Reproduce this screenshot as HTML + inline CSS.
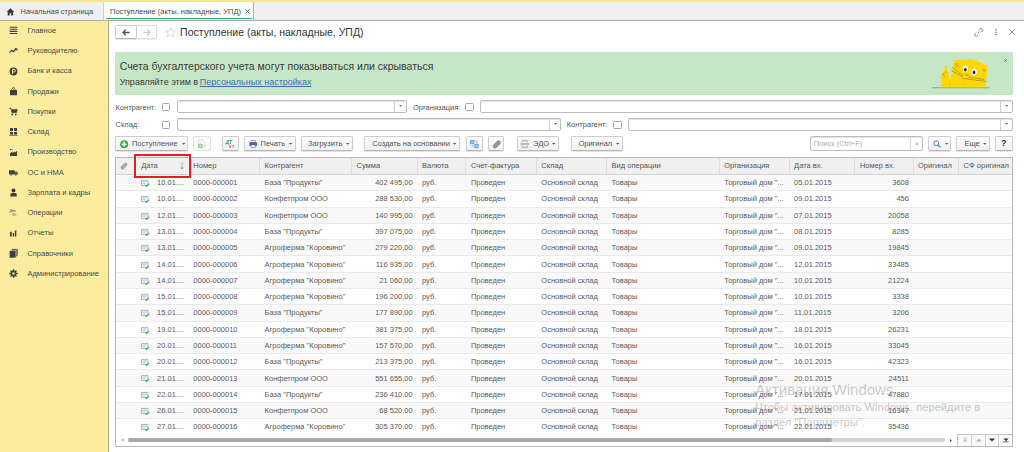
<!DOCTYPE html><html><head><meta charset="utf-8"><style>
*{margin:0;padding:0;box-sizing:border-box}
html,body{width:1024px;height:452px;overflow:hidden;background:#fff}
body{position:relative;font-family:"Liberation Sans",sans-serif;color:#595959}
.t{position:absolute;white-space:nowrap;line-height:1}
.b{position:absolute}
.btn{background:linear-gradient(#fefefe,#f1f1f1);border:1px solid #cdcdcd;border-bottom-color:#b5b5b5;border-radius:2px;box-shadow:0 1px 1px rgba(0,0,0,0.12)}
.inp{background:#fff;border:1px solid #bcbcbc;border-radius:2px;box-shadow:inset 0 1px 1px #e4e4e4}
.chk{background:#fff;border:1px solid #a9a9a9;border-radius:1.5px}
svg{position:absolute;overflow:visible}
</style></head><body>
<div class="b " style="left:0px;top:0px;width:1024px;height:2px;background:#f8e592"></div>
<div class="b " style="left:0px;top:2px;width:1024px;height:18px;background:#f0f0f0"></div>
<div class="b " style="left:0px;top:20px;width:1024px;height:1px;background:#acacac"></div>
<svg style="left:6px;top:7.6px" width="9" height="8" viewBox="0 0 9 8"><path d="M4.4 0.2 L8.2 3.9 L7.1 3.9 L7.1 7.4 L5.2 7.4 L5.2 5.3 L3.6 5.3 L3.6 7.4 L1.7 7.4 L1.7 3.9 L0.6 3.9 Z" fill="#3a3a3a"/></svg>
<div class="t" style="left:20.60px;top:7.85px;font-size:7.5px;color:#4a4a4a">Начальная страница</div>
<div class="b" style="left:103px;top:2px;width:1px;height:18px;background:#cfcfcf"></div>
<div class="b " style="left:104px;top:2px;width:149px;height:18px;background:#fff"></div>
<div class="b" style="left:253px;top:2px;width:1px;height:18px;background:#b0b0b0"></div>
<div class="b " style="left:106px;top:18px;width:146px;height:1px;background:#37b05a"></div>
<div class="t" style="left:110.00px;top:7.85px;font-size:7.5px;color:#4a4a4a">Поступление (акты, накладные, УПД)</div>
<svg style="left:245px;top:9px" width="5" height="5" viewBox="0 0 5 5"><path d="M0.3 0.3L4.7 4.7M4.7 0.3L0.3 4.7" stroke="#555" stroke-width="0.9"/></svg>
<div class="b " style="left:0px;top:21px;width:108px;height:431px;background:#fbec9e"></div>
<div class="b" style="left:108px;top:21px;width:1px;height:431px;background:#b3a97c"></div>
<div class="t" style="left:27.40px;top:26.95px;font-size:7.5px;color:#4a4a4a">Главное</div>
<div class="t" style="left:27.40px;top:47.20px;font-size:7.5px;color:#4a4a4a">Руководителю</div>
<div class="t" style="left:27.40px;top:67.45px;font-size:7.5px;color:#4a4a4a">Банк и касса</div>
<div class="t" style="left:27.40px;top:87.70px;font-size:7.5px;color:#4a4a4a">Продажи</div>
<div class="t" style="left:27.40px;top:107.95px;font-size:7.5px;color:#4a4a4a">Покупки</div>
<div class="t" style="left:27.40px;top:128.20px;font-size:7.5px;color:#4a4a4a">Склад</div>
<div class="t" style="left:27.40px;top:148.45px;font-size:7.5px;color:#4a4a4a">Производство</div>
<div class="t" style="left:27.40px;top:168.70px;font-size:7.5px;color:#4a4a4a">ОС и НМА</div>
<div class="t" style="left:27.40px;top:188.95px;font-size:7.5px;color:#4a4a4a">Зарплата и кадры</div>
<div class="t" style="left:27.40px;top:209.20px;font-size:7.5px;color:#4a4a4a">Операции</div>
<div class="t" style="left:27.40px;top:229.45px;font-size:7.5px;color:#4a4a4a">Отчеты</div>
<div class="t" style="left:27.40px;top:249.70px;font-size:7.5px;color:#4a4a4a">Справочники</div>
<div class="t" style="left:27.40px;top:269.95px;font-size:7.5px;color:#4a4a4a">Администрирование</div>
<svg style="left:9px;top:26.10px" width="9" height="9" viewBox="0 0 9 9"><path d="M0.7 1.2H8.3M0.7 3.3H8.3M0.7 5.4H8.3M0.7 7.5H8.3" stroke="#3f3f3f" stroke-width="1.1"/></svg>
<svg style="left:9px;top:46.35px" width="9" height="9" viewBox="0 0 9 9"><path d="M0.5 6.6L2.8 4.3L4.4 5.6L7.2 2.8" stroke="#3f3f3f" stroke-width="1.3" fill="none"/><path d="M5.4 2.2H8.3V5.1Z" fill="#3f3f3f"/></svg>
<svg style="left:9px;top:66.60px" width="9" height="9" viewBox="0 0 9 9"><circle cx="4.5" cy="4.5" r="3.9" fill="#3f3f3f"/><path d="M3.5 7V2.4H5.1A1.3 1.3 0 0 1 5.1 5H3.5" stroke="#fbec9e" stroke-width="1" fill="none"/></svg>
<svg style="left:9px;top:86.85px" width="9" height="9" viewBox="0 0 9 9"><path d="M1 3.2L2.6 2.2L3.6 3H5.4L6.4 2.2L8 3.2V8.2H1Z" fill="#3f3f3f"/><circle cx="4.5" cy="1.3" r="0.9" fill="none" stroke="#3f3f3f" stroke-width="0.8"/></svg>
<svg style="left:9px;top:107.10px" width="9" height="9" viewBox="0 0 9 9"><path d="M0.3 1.2H1.9L2.8 5.8H7.4L8.3 2.4H2.2" fill="#3f3f3f" stroke="#3f3f3f" stroke-width="0.6"/><circle cx="3.2" cy="7.6" r="0.9" fill="#3f3f3f"/><circle cx="6.8" cy="7.6" r="0.9" fill="#3f3f3f"/></svg>
<svg style="left:9px;top:127.35px" width="9" height="9" viewBox="0 0 9 9"><path d="M1 1H4V4H1ZM5 1H8V4H5ZM1 5H4V7.4H1ZM5 5H8V7.4H5Z" fill="#3f3f3f"/><path d="M0.5 8.3H8.5" stroke="#3f3f3f" stroke-width="0.8"/></svg>
<svg style="left:9px;top:147.60px" width="9" height="9" viewBox="0 0 9 9"><path d="M1 8.1V5.3L3.5 3.5V4.9L5.6 3.5V4.5L8.1 3.1V8.1Z" fill="#3f3f3f"/><path d="M1 0.7H2.2V1.9H1ZM2.6 1.2H3.4V2H2.6Z" fill="#3f3f3f"/></svg>
<svg style="left:9px;top:167.85px" width="9" height="9" viewBox="0 0 9 9"><path d="M0 2.2H5.6V6.4H0ZM5.6 3.2H7.6L8.8 4.6V6.4H5.6Z" fill="#3f3f3f"/><path d="M6.2 3.7H7.3L8 4.5H6.2Z" fill="#fbec9e"/><circle cx="2.1" cy="6.7" r="0.95" fill="#3f3f3f" stroke="#fbec9e" stroke-width="0.3"/><circle cx="6.8" cy="6.7" r="0.95" fill="#3f3f3f" stroke="#fbec9e" stroke-width="0.3"/></svg>
<svg style="left:9px;top:188.10px" width="9" height="9" viewBox="0 0 9 9"><circle cx="4.5" cy="2.6" r="2" fill="#3f3f3f"/><path d="M1.2 8.4V6.9Q1.2 5.3 3 5.1H6Q7.8 5.3 7.8 6.9V8.4Z" fill="#3f3f3f"/></svg>
<svg style="left:9px;top:208.35px" width="9" height="9" viewBox="0 0 9 9"><text x="0.4" y="4.2" font-size="4.2" font-style="italic" fill="#3f3f3f" font-family="Liberation Sans">Дт</text><text x="3.6" y="8.3" font-size="3.8" fill="#3f3f3f" font-family="Liberation Sans">Кт</text></svg>
<svg style="left:9px;top:228.60px" width="9" height="9" viewBox="0 0 9 9"><path d="M1 2.7H2.7V7.6H1ZM3.7 3.9H5V7.6H3.7ZM5.8 1.4H7.3V7.6H5.8Z" fill="#3f3f3f"/></svg>
<svg style="left:9px;top:248.85px" width="9" height="9" viewBox="0 0 9 9"><path d="M2.9 0.4H8.3V6.6" stroke="#3f3f3f" stroke-width="0.8" fill="none"/><path d="M1.7 1.2H7.4V7.5" stroke="#3f3f3f" stroke-width="0.6" fill="none"/><path d="M0.6 2H6.6V8.7H0.6Z" fill="#3f3f3f"/></svg>
<svg style="left:9px;top:269.10px" width="9" height="9" viewBox="0 0 9 9"><path d="M4.5 0.3V8.7M0.3 4.5H8.7M1.5 1.5L7.5 7.5M7.5 1.5L1.5 7.5" stroke="#3f3f3f" stroke-width="1.4"/><circle cx="4.5" cy="4.5" r="2.9" fill="#3f3f3f"/><circle cx="4.5" cy="4.5" r="1.3" fill="#fbec9e"/></svg>
<div class="b btn" style="left:115px;top:25px;width:22px;height:14px;border-radius:2px 0 0 2px;background:#fff"></div>
<div class="b btn" style="left:137px;top:25px;width:20px;height:14px;border-color:#dedede;border-left:none;background:#fff;box-shadow:0 1px 0 #eee;border-radius:0 2px 2px 0"></div>
<svg style="left:122px;top:28.5px" width="8" height="7" viewBox="0 0 8 7"><path d="M7.6 3.5H1.5M3.8 0.8L1 3.5L3.8 6.2" stroke="#555" stroke-width="1.4" fill="none"/></svg>
<svg style="left:143px;top:28.5px" width="8" height="7" viewBox="0 0 8 7"><path d="M0.4 3.5H6.5M4.2 0.8L7 3.5L4.2 6.2" stroke="#c9c9c9" stroke-width="1.2" fill="none"/></svg>
<svg style="left:164.5px;top:27px" width="11" height="11" viewBox="0 0 11 11"><path d="M5.5 0.6L6.9 4H10.4L7.6 6.2L8.6 9.9L5.5 7.7L2.4 9.9L3.4 6.2L0.6 4H4.1Z" fill="none" stroke="#cfcfcf" stroke-width="0.8"/></svg>
<div class="t" style="left:180.10px;top:27.01px;font-size:10.5px;color:#333">Поступление (акты, накладные, УПД)</div>
<svg style="left:974px;top:28px" width="9" height="9" viewBox="0 0 9 9"><path d="M3.6 5.4L5.4 3.6M4.6 2.2L5.8 1A1.5 1.5 0 0 1 8 3.2L6.8 4.4M4.4 6.8L3.2 8A1.5 1.5 0 0 1 1 5.8L2.2 4.6" stroke="#8a8a8a" stroke-width="0.95" fill="none"/></svg>
<svg style="left:993.5px;top:28px" width="4" height="8" viewBox="0 0 4 8"><circle cx="2" cy="1.8" r="0.75" fill="#666"/><circle cx="2" cy="4.2" r="0.75" fill="#666"/><circle cx="2" cy="6.6" r="0.75" fill="#666"/></svg>
<svg style="left:1009px;top:29px" width="6" height="6" viewBox="0 0 6 6"><path d="M0.3 0.3L5.7 5.7M5.7 0.3L0.3 5.7" stroke="#777" stroke-width="0.8"/></svg>
<div class="b " style="left:115px;top:52px;width:898px;height:43px;background:#c6e7c6"></div>
<div class="t" style="left:119.70px;top:61.11px;font-size:10.5px;color:#3a3a3a">Счета бухгалтерского учета могут показываться или скрываться</div>
<div class="t" style="left:119.70px;top:78.18px;font-size:9px;color:#3a3a3a">Управляйте этим в </div>
<div class="t" style="left:199.80px;top:78.18px;font-size:9px;color:#3a6fb0;text-decoration:underline;text-decoration-skip-ink:none">Персональных настройках</div>
<svg style="left:1003.5px;top:58.5px" width="3" height="3" viewBox="0 0 3 3"><path d="M0.2 0.2L2.8 2.8M2.8 0.2L0.2 2.8" stroke="#666" stroke-width="0.7"/></svg>
<svg style="left:935px;top:55px" width="60" height="37" viewBox="0 0 60 37">
<path d="M-2.5 32.8H54.5" stroke="#8f9f86" stroke-width="1.1"/>
<path d="M6.5 32.3 L6 25 Q5.6 19 8 16.5 Q9.5 15.5 9.8 14.8 L9.7 11.5 Q10.6 9.8 11.8 11 L12 15 Q13.8 17 13.5 21 L14.6 24.5 L14.6 32.3Z" fill="#fdd800"/>
<path d="M14.6 32.3 L14.8 25 Q16.5 20 17.5 14 Q18 8 19.6 4.8 L28 5.2 L30 4.2 L32 5 L34 3.8 L36.5 4.8 L39 4.5 Q46 7.5 52.5 11 L51.8 20 Q50.5 26 50.2 32.3Z" fill="#fdd800"/>
<circle cx="8.4" cy="19.5" r="1.2" fill="#f7a21e"/><circle cx="10.6" cy="17.4" r="1" fill="#f7a21e"/><circle cx="9.8" cy="21.5" r="0.8" fill="#f7a21e"/>
<path d="M14.7 25.5V32" stroke="#f2a52a" stroke-width="0.6"/>
<ellipse cx="21.8" cy="10" rx="1.6" ry="2" fill="#f7a21e"/>
<ellipse cx="49.2" cy="15.2" rx="1.7" ry="1.8" fill="#f7a21e"/>
<ellipse cx="30.3" cy="14" rx="2.6" ry="3.4" fill="#fff"/><ellipse cx="30.3" cy="14.7" rx="1.4" ry="1.7" fill="#2a2a2a"/>
<ellipse cx="39.1" cy="16.8" rx="2.8" ry="3.4" fill="#fff"/><ellipse cx="39" cy="17.4" rx="1.4" ry="1.8" fill="#2a2a2a"/>
<path d="M29.5 18.6L34.5 19.6L31.8 21.5Z" fill="#f7931e"/>
<path d="M17.2 12.3L28.6 20.9M16.4 15.5L27.8 21.7M27 23.3L52.4 26.6M33.6 22.1L49.1 24.5" stroke="#7d7238" stroke-width="0.55" fill="none"/>
<path d="M28.8 26.5Q29 28.3 30.6 28.8" stroke="#f2a52a" stroke-width="0.6" fill="none"/>
</svg>
<div class="t" style="left:115.50px;top:103.55px;font-size:7.5px;color:#555">Контрагент:</div>
<div class="b chk" style="left:162px;top:103px;width:8px;height:8px;"></div>
<div class="b inp" style="left:177px;top:100px;width:230px;height:13px;"></div>
<div class="b" style="left:394px;top:101px;width:1px;height:11px;background:#cfcfcf"></div>
<svg style="left:398.9px;top:104.8px" width="4" height="3" viewBox="0 0 4 3"><path d="M0 0H3.2L1.6 2Z" fill="#777"/></svg>
<div class="t" style="left:413.00px;top:103.55px;font-size:7.5px;color:#555">Организация:</div>
<div class="b chk" style="left:465px;top:103px;width:9px;height:8px;"></div>
<div class="b inp" style="left:480px;top:100px;width:533px;height:13px;"></div>
<div class="b" style="left:1000px;top:101px;width:1px;height:11px;background:#cfcfcf"></div>
<svg style="left:1005.4px;top:104.8px" width="4" height="3" viewBox="0 0 4 3"><path d="M0 0H3.2L1.6 2Z" fill="#777"/></svg>
<div class="t" style="left:115.50px;top:121.45px;font-size:7.5px;color:#555">Склад:</div>
<div class="b chk" style="left:162px;top:121px;width:8px;height:8px;"></div>
<div class="b inp" style="left:177px;top:118px;width:384px;height:13px;"></div>
<div class="b" style="left:549px;top:119px;width:1px;height:11px;background:#cfcfcf"></div>
<svg style="left:553.9px;top:122.8px" width="4" height="3" viewBox="0 0 4 3"><path d="M0 0H3.2L1.6 2Z" fill="#777"/></svg>
<div class="t" style="left:566.70px;top:121.45px;font-size:7.5px;color:#555">Контрагент:</div>
<div class="b chk" style="left:613px;top:121px;width:9px;height:8px;"></div>
<div class="b inp" style="left:628px;top:118px;width:385px;height:13px;"></div>
<div class="b" style="left:1000px;top:119px;width:1px;height:11px;background:#cfcfcf"></div>
<svg style="left:1005.4px;top:122.8px" width="4" height="3" viewBox="0 0 4 3"><path d="M0 0H3.2L1.6 2Z" fill="#777"/></svg>
<div class="b btn" style="left:115px;top:136px;width:73px;height:15px;"></div>
<svg style="left:119.7px;top:140.4px" width="8.4" height="8.4" viewBox="0 0 9 9"><circle cx="4.5" cy="4.5" r="4.3" fill="#3aaa4a"/><path d="M4.5 2V7M2 4.5H7" stroke="#fff" stroke-width="1.6"/></svg>
<div class="t" style="left:131.90px;top:139.85px;font-size:7.5px;color:#505050">Поступление</div>
<svg style="left:181.50px;top:143.1px" width="4" height="3" viewBox="0 0 4 3"><path d="M0 0H3.4L1.7 1.7Z" fill="#555"/></svg>
<div class="b btn" style="left:193px;top:136px;width:18px;height:15px;background:#fafafa;border-color:#e0e0e0;box-shadow:none"></div>
<svg style="left:197px;top:139px" width="9" height="10" viewBox="0 0 9 10"><path d="M1.3 1H5.6L7.6 3V8.6H1.3Z" fill="#f7f7f7" stroke="#d2d2d2" stroke-width="0.6"/><circle cx="3.4" cy="6.8" r="2.4" fill="#86c894"/><path d="M3.4 5.6V8M2.2 6.8H4.6" stroke="#e8f5ea" stroke-width="0.8"/></svg>
<div class="b btn" style="left:222px;top:136px;width:17px;height:15px;"></div>
<svg style="left:224.5px;top:139px" width="11" height="10" viewBox="0 0 11 10"><text x="0.6" y="4.8" font-size="4.8" font-weight="bold" font-style="italic" fill="#2f9e44" font-family="Liberation Sans">ДТ</text><text x="4" y="8.6" font-size="4.2" font-weight="bold" fill="#e5533f" font-family="Liberation Sans">КТ</text></svg>
<div class="b btn" style="left:244px;top:136px;width:52px;height:15px;"></div>
<svg style="left:248.5px;top:139.5px" width="8.5" height="8" viewBox="0 0 9 8"><path d="M2.3 0.3H6.7V2.4H2.3Z" fill="#fff" stroke="#4a6a9a" stroke-width="0.6"/><path d="M0.4 2.6Q0.4 2.2 1 2.2H8Q8.6 2.2 8.6 2.6V6H0.4Z" fill="#4a6a9a"/><path d="M2.2 5H6.8V7.7H2.2Z" fill="#fff" stroke="#4a6a9a" stroke-width="0.6"/></svg>
<div class="t" style="left:260.50px;top:139.85px;font-size:7.5px;color:#505050">Печать</div>
<svg style="left:288.50px;top:143.1px" width="4" height="3" viewBox="0 0 4 3"><path d="M0 0H3.4L1.7 1.7Z" fill="#555"/></svg>
<div class="b btn" style="left:301px;top:136px;width:52px;height:15px;"></div>
<div class="t" style="left:308.10px;top:139.85px;font-size:7.5px;color:#505050">Загрузить</div>
<svg style="left:346.00px;top:143.1px" width="4" height="3" viewBox="0 0 4 3"><path d="M0 0H3.4L1.7 1.7Z" fill="#555"/></svg>
<div class="b btn" style="left:364px;top:136px;width:96px;height:15px;"></div>
<div class="t" style="left:372.20px;top:139.85px;font-size:7.5px;color:#505050">Создать на основании</div>
<svg style="left:453.00px;top:143.1px" width="4" height="3" viewBox="0 0 4 3"><path d="M0 0H3.4L1.7 1.7Z" fill="#555"/></svg>
<div class="b btn" style="left:466px;top:136px;width:17px;height:15px;"></div>
<svg style="left:470px;top:139.8px" width="8.6" height="8.3" viewBox="0 0 8.6 8.3"><path d="M0 0H8.6V8.3H0Z" fill="#e3edf8"/><path d="M0 0H4.3V4.1H0ZM4.3 4.1H8.6V8.3H4.3Z" fill="#7aa6d8"/><path d="M1 1H3.3V3.1H1ZM5.3 5.1H7.6V7.3H5.3Z" fill="#9dc0e6"/><path d="M0.6 5H2.6V7.6M6 0.7V3.2H8" stroke="#8fb4e0" stroke-width="0.6" fill="none"/></svg>
<div class="b btn" style="left:488px;top:136px;width:16px;height:15px;"></div>
<svg style="left:491.5px;top:139.8px" width="9" height="8.5" viewBox="0 0 9 8.5"><path d="M3 6.2L6.6 2.6" stroke="#909090" stroke-width="4.4" stroke-linecap="round"/><path d="M3.2 5.4L5.9 2.7" stroke="#b0b0b0" stroke-width="0.6"/></svg>
<div class="b btn" style="left:517px;top:136px;width:42px;height:15px;"></div>
<svg style="left:519.8px;top:139.8px" width="9.4" height="8" viewBox="0 0 9.4 8"><path d="M2 0.4H7.4V2.6M2 2.6V0.4M2 5.4V7.6H7.4V5.4" stroke="#9c9c9c" stroke-width="0.7" fill="none"/><path d="M0.3 4L1.6 2.8V5.2ZM9.1 4L7.8 2.8V5.2Z" fill="#8a8a8a"/><path d="M1.4 3.1H8V4.9H1.4Z" fill="#b5b5b5"/><path d="M2.8 1.4H6.6M2.8 6.5H6.6" stroke="#b8b8b8" stroke-width="0.6"/></svg>
<div class="t" style="left:533.10px;top:139.85px;font-size:7.5px;color:#505050">ЭДО</div>
<svg style="left:552.00px;top:143.1px" width="4" height="3" viewBox="0 0 4 3"><path d="M0 0H3.4L1.7 1.7Z" fill="#555"/></svg>
<div class="b btn" style="left:571px;top:136px;width:52px;height:15px;"></div>
<div class="t" style="left:578.40px;top:139.85px;font-size:7.5px;color:#505050">Оригинал</div>
<svg style="left:616.00px;top:143.1px" width="4" height="3" viewBox="0 0 4 3"><path d="M0 0H3.4L1.7 1.7Z" fill="#555"/></svg>
<div class="b inp" style="left:810px;top:136px;width:113px;height:15px;"></div>
<div class="b" style="left:910px;top:137px;width:1px;height:13px;background:#d6d6d6"></div>
<div class="t" style="left:813.80px;top:140.05px;font-size:7.5px;color:#adadad">Поиск (Ctrl+F)</div>
<svg style="left:914.8px;top:142.2px" width="3.6" height="3.6" viewBox="0 0 4 4"><path d="M0.3 0.3L3.7 3.7M3.7 0.3L0.3 3.7" stroke="#888" stroke-width="0.7"/></svg>
<div class="b btn" style="left:928px;top:136px;width:23px;height:15px;"></div>
<svg style="left:932.5px;top:139.6px" width="8" height="8" viewBox="0 0 8 8"><circle cx="3.2" cy="3.2" r="2.4" fill="none" stroke="#4a7fc0" stroke-width="1"/><path d="M4.9 4.9L7.3 7.3" stroke="#4a7fc0" stroke-width="1.4"/></svg>
<svg style="left:944.50px;top:143.1px" width="4" height="3" viewBox="0 0 4 3"><path d="M0 0H3.4L1.7 1.7Z" fill="#555"/></svg>
<div class="b btn" style="left:956px;top:136px;width:34px;height:15px;"></div>
<div class="t" style="left:964.50px;top:139.85px;font-size:7.5px;color:#505050">Еще</div>
<svg style="left:983.30px;top:143.1px" width="4" height="3" viewBox="0 0 4 3"><path d="M0 0H3.4L1.7 1.7Z" fill="#555"/></svg>
<div class="b btn" style="left:995px;top:136px;width:18px;height:15px;"></div>
<div class="t" style="left:1001.00px;top:138.98px;font-size:9px;color:#333;font-weight:bold">?</div>
<div class="b " style="left:115px;top:157px;width:898px;height:290px;border:1px solid #b9b9b9;background:#fff"></div>
<div class="b " style="left:116px;top:158px;width:896px;height:17px;background:#f0f0f0;border-bottom:1px solid #d4d4d4"></div>
<div class="b" style="left:135px;top:158px;width:1px;height:16px;background:#dedede"></div>
<div class="b" style="left:191px;top:158px;width:1px;height:16px;background:#dedede"></div>
<div class="b" style="left:259px;top:158px;width:1px;height:16px;background:#dedede"></div>
<div class="b" style="left:351px;top:158px;width:1px;height:16px;background:#dedede"></div>
<div class="b" style="left:417px;top:158px;width:1px;height:16px;background:#dedede"></div>
<div class="b" style="left:465px;top:158px;width:1px;height:16px;background:#dedede"></div>
<div class="b" style="left:536px;top:158px;width:1px;height:16px;background:#dedede"></div>
<div class="b" style="left:606px;top:158px;width:1px;height:16px;background:#dedede"></div>
<div class="b" style="left:719px;top:158px;width:1px;height:16px;background:#dedede"></div>
<div class="b" style="left:789px;top:158px;width:1px;height:16px;background:#dedede"></div>
<div class="b" style="left:854px;top:158px;width:1px;height:16px;background:#dedede"></div>
<div class="b" style="left:913px;top:158px;width:1px;height:16px;background:#dedede"></div>
<div class="b" style="left:958px;top:158px;width:1px;height:16px;background:#dedede"></div>
<div class="t" style="left:141.20px;top:161.85px;font-size:7.5px;color:#555">Дата</div>
<div class="t" style="left:193.30px;top:161.85px;font-size:7.5px;color:#555">Номер</div>
<div class="t" style="left:264.60px;top:161.85px;font-size:7.5px;color:#555">Контрагент</div>
<div class="t" style="left:356.50px;top:161.85px;font-size:7.5px;color:#555">Сумма</div>
<div class="t" style="left:422.00px;top:161.85px;font-size:7.5px;color:#555">Валюта</div>
<div class="t" style="left:470.90px;top:161.85px;font-size:7.5px;color:#555">Счет-фактура</div>
<div class="t" style="left:541.30px;top:161.85px;font-size:7.5px;color:#555">Склад</div>
<div class="t" style="left:611.60px;top:161.85px;font-size:7.5px;color:#555">Вид операции</div>
<div class="t" style="left:724.20px;top:161.85px;font-size:7.5px;color:#555">Организация</div>
<div class="t" style="left:794.10px;top:161.85px;font-size:7.5px;color:#555">Дата вх.</div>
<div class="t" style="left:859.90px;top:161.85px;font-size:7.5px;color:#555">Номер вх.</div>
<div class="t" style="left:918.00px;top:161.85px;font-size:7.5px;color:#555">Оригинал</div>
<div class="t" style="left:963.60px;top:161.85px;font-size:7.5px;color:#555">СФ оригинал</div>
<svg style="left:119.5px;top:161.5px" width="8" height="8" viewBox="0 0 8 8"><path d="M2.4 5.7L5.6 2.5" stroke="#a6a6a6" stroke-width="3.8" stroke-linecap="round"/><path d="M2.6 5L5 2.6" stroke="#c4c4c4" stroke-width="0.5"/></svg>
<svg style="left:180px;top:161.6px" width="4" height="8" viewBox="0 0 4 8"><path d="M2 0.4V6.6" stroke="#7a8aa0" stroke-width="0.65"/><path d="M1 5.3L2 7L3 5.3" stroke="#555" stroke-width="0.6" fill="none"/></svg>
<div class="b " style="left:116px;top:175px;width:896px;height:16px;background:#f9f9f9;border-bottom:1px solid #eaeaea"></div>
<svg style="left:141px;top:180.10px" width="9" height="8" viewBox="0 0 9 8"><path d="M0.4 0.4H7V5.6H0.4Z" fill="#f4f6fa" stroke="#8e9cb6" stroke-width="0.7"/><path d="M1.6 2H5.6M1.6 3.4H4" stroke="#8e9cb6" stroke-width="0.6"/><path d="M4.5 5.2L5.6 6.4L7.9 3.9" stroke="#35b046" stroke-width="1.2" fill="none"/></svg>
<div class="t" style="left:157.10px;top:179.15px;font-size:7.5px">10.01....</div>
<div class="t" style="left:193.30px;top:179.15px;font-size:7.5px">0000-000001</div>
<div class="t" style="left:264.60px;top:179.15px;font-size:7.5px">База "Продукты"</div>
<div class="t" style="right:611.30px;top:179.15px;font-size:7.5px">402 495,00</div>
<div class="t" style="left:422.00px;top:179.15px;font-size:7.5px">руб.</div>
<div class="t" style="left:470.90px;top:179.15px;font-size:7.5px">Проведен</div>
<div class="t" style="left:541.30px;top:179.15px;font-size:7.5px">Основной склад</div>
<div class="t" style="left:611.60px;top:179.15px;font-size:7.5px">Товары</div>
<div class="t" style="left:724.20px;top:179.15px;font-size:7.5px">Торговый дом "...</div>
<div class="t" style="left:794.10px;top:179.15px;font-size:7.5px">05.01.2015</div>
<div class="t" style="right:115.10px;top:179.15px;font-size:7.5px">3608</div>
<div class="b " style="left:116px;top:191px;width:896px;height:17px;background:#fff;border-bottom:1px solid #eaeaea"></div>
<svg style="left:141px;top:196.38px" width="9" height="8" viewBox="0 0 9 8"><path d="M0.4 0.4H7V5.6H0.4Z" fill="#f4f6fa" stroke="#8e9cb6" stroke-width="0.7"/><path d="M1.6 2H5.6M1.6 3.4H4" stroke="#8e9cb6" stroke-width="0.6"/><path d="M4.5 5.2L5.6 6.4L7.9 3.9" stroke="#35b046" stroke-width="1.2" fill="none"/></svg>
<div class="t" style="left:157.10px;top:195.43px;font-size:7.5px">10.01....</div>
<div class="t" style="left:193.30px;top:195.43px;font-size:7.5px">0000-000002</div>
<div class="t" style="left:264.60px;top:195.43px;font-size:7.5px">Конфетпром ООО</div>
<div class="t" style="right:611.30px;top:195.43px;font-size:7.5px">288 530,00</div>
<div class="t" style="left:422.00px;top:195.43px;font-size:7.5px">руб.</div>
<div class="t" style="left:470.90px;top:195.43px;font-size:7.5px">Проведен</div>
<div class="t" style="left:541.30px;top:195.43px;font-size:7.5px">Основной склад</div>
<div class="t" style="left:611.60px;top:195.43px;font-size:7.5px">Товары</div>
<div class="t" style="left:724.20px;top:195.43px;font-size:7.5px">Торговый дом "...</div>
<div class="t" style="left:794.10px;top:195.43px;font-size:7.5px">09.01.2015</div>
<div class="t" style="right:115.10px;top:195.43px;font-size:7.5px">456</div>
<div class="b " style="left:116px;top:208px;width:896px;height:16px;background:#f9f9f9;border-bottom:1px solid #eaeaea"></div>
<svg style="left:141px;top:212.66px" width="9" height="8" viewBox="0 0 9 8"><path d="M0.4 0.4H7V5.6H0.4Z" fill="#f4f6fa" stroke="#8e9cb6" stroke-width="0.7"/><path d="M1.6 2H5.6M1.6 3.4H4" stroke="#8e9cb6" stroke-width="0.6"/><path d="M4.5 5.2L5.6 6.4L7.9 3.9" stroke="#35b046" stroke-width="1.2" fill="none"/></svg>
<div class="t" style="left:157.10px;top:211.71px;font-size:7.5px">12.01....</div>
<div class="t" style="left:193.30px;top:211.71px;font-size:7.5px">0000-000003</div>
<div class="t" style="left:264.60px;top:211.71px;font-size:7.5px">Конфетпром ООО</div>
<div class="t" style="right:611.30px;top:211.71px;font-size:7.5px">140 995,00</div>
<div class="t" style="left:422.00px;top:211.71px;font-size:7.5px">руб.</div>
<div class="t" style="left:470.90px;top:211.71px;font-size:7.5px">Проведен</div>
<div class="t" style="left:541.30px;top:211.71px;font-size:7.5px">Основной склад</div>
<div class="t" style="left:611.60px;top:211.71px;font-size:7.5px">Товары</div>
<div class="t" style="left:724.20px;top:211.71px;font-size:7.5px">Торговый дом "...</div>
<div class="t" style="left:794.10px;top:211.71px;font-size:7.5px">07.01.2015</div>
<div class="t" style="right:115.10px;top:211.71px;font-size:7.5px">20058</div>
<div class="b " style="left:116px;top:224px;width:896px;height:16px;background:#fff;border-bottom:1px solid #eaeaea"></div>
<svg style="left:141px;top:228.94px" width="9" height="8" viewBox="0 0 9 8"><path d="M0.4 0.4H7V5.6H0.4Z" fill="#f4f6fa" stroke="#8e9cb6" stroke-width="0.7"/><path d="M1.6 2H5.6M1.6 3.4H4" stroke="#8e9cb6" stroke-width="0.6"/><path d="M4.5 5.2L5.6 6.4L7.9 3.9" stroke="#35b046" stroke-width="1.2" fill="none"/></svg>
<div class="t" style="left:157.10px;top:227.99px;font-size:7.5px">13.01....</div>
<div class="t" style="left:193.30px;top:227.99px;font-size:7.5px">0000-000004</div>
<div class="t" style="left:264.60px;top:227.99px;font-size:7.5px">База "Продукты"</div>
<div class="t" style="right:611.30px;top:227.99px;font-size:7.5px">397 075,00</div>
<div class="t" style="left:422.00px;top:227.99px;font-size:7.5px">руб.</div>
<div class="t" style="left:470.90px;top:227.99px;font-size:7.5px">Проведен</div>
<div class="t" style="left:541.30px;top:227.99px;font-size:7.5px">Основной склад</div>
<div class="t" style="left:611.60px;top:227.99px;font-size:7.5px">Товары</div>
<div class="t" style="left:724.20px;top:227.99px;font-size:7.5px">Торговый дом "...</div>
<div class="t" style="left:794.10px;top:227.99px;font-size:7.5px">08.01.2015</div>
<div class="t" style="right:115.10px;top:227.99px;font-size:7.5px">8285</div>
<div class="b " style="left:116px;top:240px;width:896px;height:16px;background:#f9f9f9;border-bottom:1px solid #eaeaea"></div>
<svg style="left:141px;top:245.22px" width="9" height="8" viewBox="0 0 9 8"><path d="M0.4 0.4H7V5.6H0.4Z" fill="#f4f6fa" stroke="#8e9cb6" stroke-width="0.7"/><path d="M1.6 2H5.6M1.6 3.4H4" stroke="#8e9cb6" stroke-width="0.6"/><path d="M4.5 5.2L5.6 6.4L7.9 3.9" stroke="#35b046" stroke-width="1.2" fill="none"/></svg>
<div class="t" style="left:157.10px;top:244.27px;font-size:7.5px">13.01....</div>
<div class="t" style="left:193.30px;top:244.27px;font-size:7.5px">0000-000005</div>
<div class="t" style="left:264.60px;top:244.27px;font-size:7.5px">Агроферма "Коровино"</div>
<div class="t" style="right:611.30px;top:244.27px;font-size:7.5px">279 220,00</div>
<div class="t" style="left:422.00px;top:244.27px;font-size:7.5px">руб.</div>
<div class="t" style="left:470.90px;top:244.27px;font-size:7.5px">Проведен</div>
<div class="t" style="left:541.30px;top:244.27px;font-size:7.5px">Основной склад</div>
<div class="t" style="left:611.60px;top:244.27px;font-size:7.5px">Товары</div>
<div class="t" style="left:724.20px;top:244.27px;font-size:7.5px">Торговый дом "...</div>
<div class="t" style="left:794.10px;top:244.27px;font-size:7.5px">09.01.2015</div>
<div class="t" style="right:115.10px;top:244.27px;font-size:7.5px">19845</div>
<div class="b " style="left:116px;top:256px;width:896px;height:17px;background:#fff;border-bottom:1px solid #eaeaea"></div>
<svg style="left:141px;top:261.50px" width="9" height="8" viewBox="0 0 9 8"><path d="M0.4 0.4H7V5.6H0.4Z" fill="#f4f6fa" stroke="#8e9cb6" stroke-width="0.7"/><path d="M1.6 2H5.6M1.6 3.4H4" stroke="#8e9cb6" stroke-width="0.6"/><path d="M4.5 5.2L5.6 6.4L7.9 3.9" stroke="#35b046" stroke-width="1.2" fill="none"/></svg>
<div class="t" style="left:157.10px;top:260.55px;font-size:7.5px">14.01....</div>
<div class="t" style="left:193.30px;top:260.55px;font-size:7.5px">0000-000006</div>
<div class="t" style="left:264.60px;top:260.55px;font-size:7.5px">Агроферма "Коровино"</div>
<div class="t" style="right:611.30px;top:260.55px;font-size:7.5px">116 935,00</div>
<div class="t" style="left:422.00px;top:260.55px;font-size:7.5px">руб.</div>
<div class="t" style="left:470.90px;top:260.55px;font-size:7.5px">Проведен</div>
<div class="t" style="left:541.30px;top:260.55px;font-size:7.5px">Основной склад</div>
<div class="t" style="left:611.60px;top:260.55px;font-size:7.5px">Товары</div>
<div class="t" style="left:724.20px;top:260.55px;font-size:7.5px">Торговый дом "...</div>
<div class="t" style="left:794.10px;top:260.55px;font-size:7.5px">12.01.2015</div>
<div class="t" style="right:115.10px;top:260.55px;font-size:7.5px">33485</div>
<div class="b " style="left:116px;top:273px;width:896px;height:16px;background:#f9f9f9;border-bottom:1px solid #eaeaea"></div>
<svg style="left:141px;top:277.78px" width="9" height="8" viewBox="0 0 9 8"><path d="M0.4 0.4H7V5.6H0.4Z" fill="#f4f6fa" stroke="#8e9cb6" stroke-width="0.7"/><path d="M1.6 2H5.6M1.6 3.4H4" stroke="#8e9cb6" stroke-width="0.6"/><path d="M4.5 5.2L5.6 6.4L7.9 3.9" stroke="#35b046" stroke-width="1.2" fill="none"/></svg>
<div class="t" style="left:157.10px;top:276.83px;font-size:7.5px">14.01....</div>
<div class="t" style="left:193.30px;top:276.83px;font-size:7.5px">0000-000007</div>
<div class="t" style="left:264.60px;top:276.83px;font-size:7.5px">Агроферма "Коровино"</div>
<div class="t" style="right:611.30px;top:276.83px;font-size:7.5px">21 060,00</div>
<div class="t" style="left:422.00px;top:276.83px;font-size:7.5px">руб.</div>
<div class="t" style="left:470.90px;top:276.83px;font-size:7.5px">Проведен</div>
<div class="t" style="left:541.30px;top:276.83px;font-size:7.5px">Основной склад</div>
<div class="t" style="left:611.60px;top:276.83px;font-size:7.5px">Товары</div>
<div class="t" style="left:724.20px;top:276.83px;font-size:7.5px">Торговый дом "...</div>
<div class="t" style="left:794.10px;top:276.83px;font-size:7.5px">10.01.2015</div>
<div class="t" style="right:115.10px;top:276.83px;font-size:7.5px">21224</div>
<div class="b " style="left:116px;top:289px;width:896px;height:16px;background:#fff;border-bottom:1px solid #eaeaea"></div>
<svg style="left:141px;top:294.06px" width="9" height="8" viewBox="0 0 9 8"><path d="M0.4 0.4H7V5.6H0.4Z" fill="#f4f6fa" stroke="#8e9cb6" stroke-width="0.7"/><path d="M1.6 2H5.6M1.6 3.4H4" stroke="#8e9cb6" stroke-width="0.6"/><path d="M4.5 5.2L5.6 6.4L7.9 3.9" stroke="#35b046" stroke-width="1.2" fill="none"/></svg>
<div class="t" style="left:157.10px;top:293.11px;font-size:7.5px">15.01....</div>
<div class="t" style="left:193.30px;top:293.11px;font-size:7.5px">0000-000008</div>
<div class="t" style="left:264.60px;top:293.11px;font-size:7.5px">Агроферма "Коровино"</div>
<div class="t" style="right:611.30px;top:293.11px;font-size:7.5px">196 200,00</div>
<div class="t" style="left:422.00px;top:293.11px;font-size:7.5px">руб.</div>
<div class="t" style="left:470.90px;top:293.11px;font-size:7.5px">Проведен</div>
<div class="t" style="left:541.30px;top:293.11px;font-size:7.5px">Основной склад</div>
<div class="t" style="left:611.60px;top:293.11px;font-size:7.5px">Товары</div>
<div class="t" style="left:724.20px;top:293.11px;font-size:7.5px">Торговый дом "...</div>
<div class="t" style="left:794.10px;top:293.11px;font-size:7.5px">10.01.2015</div>
<div class="t" style="right:115.10px;top:293.11px;font-size:7.5px">3338</div>
<div class="b " style="left:116px;top:305px;width:896px;height:17px;background:#f9f9f9;border-bottom:1px solid #eaeaea"></div>
<svg style="left:141px;top:310.34px" width="9" height="8" viewBox="0 0 9 8"><path d="M0.4 0.4H7V5.6H0.4Z" fill="#f4f6fa" stroke="#8e9cb6" stroke-width="0.7"/><path d="M1.6 2H5.6M1.6 3.4H4" stroke="#8e9cb6" stroke-width="0.6"/><path d="M4.5 5.2L5.6 6.4L7.9 3.9" stroke="#35b046" stroke-width="1.2" fill="none"/></svg>
<div class="t" style="left:157.10px;top:309.39px;font-size:7.5px">15.01....</div>
<div class="t" style="left:193.30px;top:309.39px;font-size:7.5px">0000-000009</div>
<div class="t" style="left:264.60px;top:309.39px;font-size:7.5px">База "Продукты"</div>
<div class="t" style="right:611.30px;top:309.39px;font-size:7.5px">177 890,00</div>
<div class="t" style="left:422.00px;top:309.39px;font-size:7.5px">руб.</div>
<div class="t" style="left:470.90px;top:309.39px;font-size:7.5px">Проведен</div>
<div class="t" style="left:541.30px;top:309.39px;font-size:7.5px">Основной склад</div>
<div class="t" style="left:611.60px;top:309.39px;font-size:7.5px">Товары</div>
<div class="t" style="left:724.20px;top:309.39px;font-size:7.5px">Торговый дом "...</div>
<div class="t" style="left:794.10px;top:309.39px;font-size:7.5px">11.01.2015</div>
<div class="t" style="right:115.10px;top:309.39px;font-size:7.5px">3206</div>
<div class="b " style="left:116px;top:322px;width:896px;height:16px;background:#fff;border-bottom:1px solid #eaeaea"></div>
<svg style="left:141px;top:326.62px" width="9" height="8" viewBox="0 0 9 8"><path d="M0.4 0.4H7V5.6H0.4Z" fill="#f4f6fa" stroke="#8e9cb6" stroke-width="0.7"/><path d="M1.6 2H5.6M1.6 3.4H4" stroke="#8e9cb6" stroke-width="0.6"/><path d="M4.5 5.2L5.6 6.4L7.9 3.9" stroke="#35b046" stroke-width="1.2" fill="none"/></svg>
<div class="t" style="left:157.10px;top:325.67px;font-size:7.5px">19.01....</div>
<div class="t" style="left:193.30px;top:325.67px;font-size:7.5px">0000-000010</div>
<div class="t" style="left:264.60px;top:325.67px;font-size:7.5px">Агроферма "Коровино"</div>
<div class="t" style="right:611.30px;top:325.67px;font-size:7.5px">381 375,00</div>
<div class="t" style="left:422.00px;top:325.67px;font-size:7.5px">руб.</div>
<div class="t" style="left:470.90px;top:325.67px;font-size:7.5px">Проведен</div>
<div class="t" style="left:541.30px;top:325.67px;font-size:7.5px">Основной склад</div>
<div class="t" style="left:611.60px;top:325.67px;font-size:7.5px">Товары</div>
<div class="t" style="left:724.20px;top:325.67px;font-size:7.5px">Торговый дом "...</div>
<div class="t" style="left:794.10px;top:325.67px;font-size:7.5px">18.01.2015</div>
<div class="t" style="right:115.10px;top:325.67px;font-size:7.5px">26231</div>
<div class="b " style="left:116px;top:338px;width:896px;height:16px;background:#f9f9f9;border-bottom:1px solid #eaeaea"></div>
<svg style="left:141px;top:342.90px" width="9" height="8" viewBox="0 0 9 8"><path d="M0.4 0.4H7V5.6H0.4Z" fill="#f4f6fa" stroke="#8e9cb6" stroke-width="0.7"/><path d="M1.6 2H5.6M1.6 3.4H4" stroke="#8e9cb6" stroke-width="0.6"/><path d="M4.5 5.2L5.6 6.4L7.9 3.9" stroke="#35b046" stroke-width="1.2" fill="none"/></svg>
<div class="t" style="left:157.10px;top:341.95px;font-size:7.5px">20.01....</div>
<div class="t" style="left:193.30px;top:341.95px;font-size:7.5px">0000-000011</div>
<div class="t" style="left:264.60px;top:341.95px;font-size:7.5px">Агроферма "Коровино"</div>
<div class="t" style="right:611.30px;top:341.95px;font-size:7.5px">157 570,00</div>
<div class="t" style="left:422.00px;top:341.95px;font-size:7.5px">руб.</div>
<div class="t" style="left:470.90px;top:341.95px;font-size:7.5px">Проведен</div>
<div class="t" style="left:541.30px;top:341.95px;font-size:7.5px">Основной склад</div>
<div class="t" style="left:611.60px;top:341.95px;font-size:7.5px">Товары</div>
<div class="t" style="left:724.20px;top:341.95px;font-size:7.5px">Торговый дом "...</div>
<div class="t" style="left:794.10px;top:341.95px;font-size:7.5px">16.01.2015</div>
<div class="t" style="right:115.10px;top:341.95px;font-size:7.5px">33045</div>
<div class="b " style="left:116px;top:354px;width:896px;height:16px;background:#fff;border-bottom:1px solid #eaeaea"></div>
<svg style="left:141px;top:359.18px" width="9" height="8" viewBox="0 0 9 8"><path d="M0.4 0.4H7V5.6H0.4Z" fill="#f4f6fa" stroke="#8e9cb6" stroke-width="0.7"/><path d="M1.6 2H5.6M1.6 3.4H4" stroke="#8e9cb6" stroke-width="0.6"/><path d="M4.5 5.2L5.6 6.4L7.9 3.9" stroke="#35b046" stroke-width="1.2" fill="none"/></svg>
<div class="t" style="left:157.10px;top:358.23px;font-size:7.5px">20.01....</div>
<div class="t" style="left:193.30px;top:358.23px;font-size:7.5px">0000-000012</div>
<div class="t" style="left:264.60px;top:358.23px;font-size:7.5px">База "Продукты"</div>
<div class="t" style="right:611.30px;top:358.23px;font-size:7.5px">213 375,00</div>
<div class="t" style="left:422.00px;top:358.23px;font-size:7.5px">руб.</div>
<div class="t" style="left:470.90px;top:358.23px;font-size:7.5px">Проведен</div>
<div class="t" style="left:541.30px;top:358.23px;font-size:7.5px">Основной склад</div>
<div class="t" style="left:611.60px;top:358.23px;font-size:7.5px">Товары</div>
<div class="t" style="left:724.20px;top:358.23px;font-size:7.5px">Торговый дом "...</div>
<div class="t" style="left:794.10px;top:358.23px;font-size:7.5px">16.01.2015</div>
<div class="t" style="right:115.10px;top:358.23px;font-size:7.5px">42323</div>
<div class="b " style="left:116px;top:370px;width:896px;height:17px;background:#f9f9f9;border-bottom:1px solid #eaeaea"></div>
<svg style="left:141px;top:375.46px" width="9" height="8" viewBox="0 0 9 8"><path d="M0.4 0.4H7V5.6H0.4Z" fill="#f4f6fa" stroke="#8e9cb6" stroke-width="0.7"/><path d="M1.6 2H5.6M1.6 3.4H4" stroke="#8e9cb6" stroke-width="0.6"/><path d="M4.5 5.2L5.6 6.4L7.9 3.9" stroke="#35b046" stroke-width="1.2" fill="none"/></svg>
<div class="t" style="left:157.10px;top:374.51px;font-size:7.5px">21.01....</div>
<div class="t" style="left:193.30px;top:374.51px;font-size:7.5px">0000-000013</div>
<div class="t" style="left:264.60px;top:374.51px;font-size:7.5px">Конфетпром ООО</div>
<div class="t" style="right:611.30px;top:374.51px;font-size:7.5px">551 655,00</div>
<div class="t" style="left:422.00px;top:374.51px;font-size:7.5px">руб.</div>
<div class="t" style="left:470.90px;top:374.51px;font-size:7.5px">Проведен</div>
<div class="t" style="left:541.30px;top:374.51px;font-size:7.5px">Основной склад</div>
<div class="t" style="left:611.60px;top:374.51px;font-size:7.5px">Товары</div>
<div class="t" style="left:724.20px;top:374.51px;font-size:7.5px">Торговый дом "...</div>
<div class="t" style="left:794.10px;top:374.51px;font-size:7.5px">20.01.2015</div>
<div class="t" style="right:115.10px;top:374.51px;font-size:7.5px">24511</div>
<div class="b " style="left:116px;top:387px;width:896px;height:16px;background:#fff;border-bottom:1px solid #eaeaea"></div>
<svg style="left:141px;top:391.74px" width="9" height="8" viewBox="0 0 9 8"><path d="M0.4 0.4H7V5.6H0.4Z" fill="#f4f6fa" stroke="#8e9cb6" stroke-width="0.7"/><path d="M1.6 2H5.6M1.6 3.4H4" stroke="#8e9cb6" stroke-width="0.6"/><path d="M4.5 5.2L5.6 6.4L7.9 3.9" stroke="#35b046" stroke-width="1.2" fill="none"/></svg>
<div class="t" style="left:157.10px;top:390.79px;font-size:7.5px">22.01....</div>
<div class="t" style="left:193.30px;top:390.79px;font-size:7.5px">0000-000014</div>
<div class="t" style="left:264.60px;top:390.79px;font-size:7.5px">База "Продукты"</div>
<div class="t" style="right:611.30px;top:390.79px;font-size:7.5px">236 410,00</div>
<div class="t" style="left:422.00px;top:390.79px;font-size:7.5px">руб.</div>
<div class="t" style="left:470.90px;top:390.79px;font-size:7.5px">Проведен</div>
<div class="t" style="left:541.30px;top:390.79px;font-size:7.5px">Основной склад</div>
<div class="t" style="left:611.60px;top:390.79px;font-size:7.5px">Товары</div>
<div class="t" style="left:724.20px;top:390.79px;font-size:7.5px">Торговый дом "...</div>
<div class="t" style="left:794.10px;top:390.79px;font-size:7.5px">17.01.2015</div>
<div class="t" style="right:115.10px;top:390.79px;font-size:7.5px">47880</div>
<div class="b " style="left:116px;top:403px;width:896px;height:16px;background:#f9f9f9;border-bottom:1px solid #eaeaea"></div>
<svg style="left:141px;top:408.02px" width="9" height="8" viewBox="0 0 9 8"><path d="M0.4 0.4H7V5.6H0.4Z" fill="#f4f6fa" stroke="#8e9cb6" stroke-width="0.7"/><path d="M1.6 2H5.6M1.6 3.4H4" stroke="#8e9cb6" stroke-width="0.6"/><path d="M4.5 5.2L5.6 6.4L7.9 3.9" stroke="#35b046" stroke-width="1.2" fill="none"/></svg>
<div class="t" style="left:157.10px;top:407.07px;font-size:7.5px">26.01....</div>
<div class="t" style="left:193.30px;top:407.07px;font-size:7.5px">0000-000015</div>
<div class="t" style="left:264.60px;top:407.07px;font-size:7.5px">Конфетпром ООО</div>
<div class="t" style="right:611.30px;top:407.07px;font-size:7.5px">68 520,00</div>
<div class="t" style="left:422.00px;top:407.07px;font-size:7.5px">руб.</div>
<div class="t" style="left:470.90px;top:407.07px;font-size:7.5px">Проведен</div>
<div class="t" style="left:541.30px;top:407.07px;font-size:7.5px">Основной склад</div>
<div class="t" style="left:611.60px;top:407.07px;font-size:7.5px">Товары</div>
<div class="t" style="left:724.20px;top:407.07px;font-size:7.5px">Торговый дом "...</div>
<div class="t" style="left:794.10px;top:407.07px;font-size:7.5px">21.01.2015</div>
<div class="t" style="right:115.10px;top:407.07px;font-size:7.5px">16347</div>
<div class="b " style="left:116px;top:419px;width:896px;height:16px;background:#fff"></div>
<svg style="left:141px;top:424.30px" width="9" height="8" viewBox="0 0 9 8"><path d="M0.4 0.4H7V5.6H0.4Z" fill="#f4f6fa" stroke="#8e9cb6" stroke-width="0.7"/><path d="M1.6 2H5.6M1.6 3.4H4" stroke="#8e9cb6" stroke-width="0.6"/><path d="M4.5 5.2L5.6 6.4L7.9 3.9" stroke="#35b046" stroke-width="1.2" fill="none"/></svg>
<div class="t" style="left:157.10px;top:423.35px;font-size:7.5px">27.01....</div>
<div class="t" style="left:193.30px;top:423.35px;font-size:7.5px">0000-000016</div>
<div class="t" style="left:264.60px;top:423.35px;font-size:7.5px">Агроферма "Коровино"</div>
<div class="t" style="right:611.30px;top:423.35px;font-size:7.5px">305 370,00</div>
<div class="t" style="left:422.00px;top:423.35px;font-size:7.5px">руб.</div>
<div class="t" style="left:470.90px;top:423.35px;font-size:7.5px">Проведен</div>
<div class="t" style="left:541.30px;top:423.35px;font-size:7.5px">Основной склад</div>
<div class="t" style="left:611.60px;top:423.35px;font-size:7.5px">Товары</div>
<div class="t" style="left:724.20px;top:423.35px;font-size:7.5px">Торговый дом "...</div>
<div class="t" style="left:794.10px;top:423.35px;font-size:7.5px">22.01.2015</div>
<div class="t" style="right:115.10px;top:423.35px;font-size:7.5px">35436</div>
<svg style="left:120.5px;top:438px" width="3" height="4" viewBox="0 0 3 4"><path d="M2.6 0L0 2L2.6 4Z" fill="#bbb"/></svg>
<div class="b " style="left:128px;top:438px;width:817px;height:4px;background:#d3d3d3;border-radius:2px"></div>
<div class="b " style="left:128px;top:438px;width:704px;height:4px;background:#a9a9a9;border-radius:2px"></div>
<svg style="left:950.2px;top:438.5px" width="3" height="3" viewBox="0 0 3 3"><path d="M0 0L2 1.5L0 3Z" fill="#444"/></svg>
<div class="b " style="left:957px;top:434px;width:55px;height:12px;border-top:1px solid #c4c4c4;border-left:1px solid #c4c4c4;background:#fafafa"></div>
<div class="b" style="left:971px;top:435px;width:1px;height:11px;background:#cfcfcf"></div>
<div class="b" style="left:985px;top:435px;width:1px;height:11px;background:#cfcfcf"></div>
<div class="b" style="left:998px;top:435px;width:1px;height:11px;background:#cfcfcf"></div>
<svg style="left:960.5px;top:437px" width="8" height="6" viewBox="0 0 8 6"><path d="M1.6 1H6.4" stroke="#bdbdbd" stroke-width="0.7"/><path d="M4 1.8L1.8 4.4H6.2Z" fill="#bdbdbd"/></svg>
<svg style="left:974.5px;top:438px" width="8" height="4" viewBox="0 0 8 4"><path d="M4 0.5L0.8 3.6H7.2Z" fill="#b5b5b5"/></svg>
<svg style="left:988px;top:438.2px" width="8" height="4" viewBox="0 0 8 4"><path d="M4 3.5L0.8 0.4H7.2Z" fill="#333"/></svg>
<svg style="left:1002px;top:437px" width="8" height="6" viewBox="0 0 8 6"><path d="M1.4 4.8H6.6" stroke="#3a3a3a" stroke-width="0.8"/><path d="M4 4.2L1.4 1.4H6.6Z" fill="#3a3a3a"/></svg>
<div class="b " style="left:134px;top:154px;width:57px;height:24px;border:2px solid #e21f26;box-shadow:inset 0 0 0 1px rgba(255,255,255,0.75)"></div>
<div class="t" style="left:755.20px;top:381.90px;font-size:15px;color:rgba(120,120,120,0.42)">Активация Windows</div>
<div class="t" style="left:755.20px;top:401.52px;font-size:11.2px;color:rgba(120,120,120,0.42)">Чтобы активировать Windows, перейдите в</div>
<div class="t" style="left:755.20px;top:416.52px;font-size:11.2px;color:rgba(120,120,120,0.42)">раздел "Параметры".</div>
</body></html>
